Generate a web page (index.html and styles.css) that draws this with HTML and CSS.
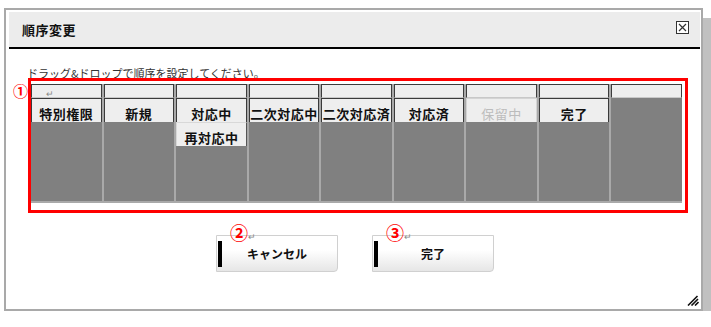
FILE: index.html
```html
<!DOCTYPE html>
<html lang="ja">

<head>
        <meta charset="UTF-8">
        <meta name="viewport" content="width=device-width, initial-scale=1.0">
        <title>順序変更</title>
        <link rel="stylesheet" href="styles.css">
</head>

<body>
        <div class="dialog">
                <div class="dlg-head">
                        <span class="dlg-title">順序変更</span>
                        <span class="dlg-close">
                                <svg width="13" height="13" viewBox="0 0 13 13">
                                        <rect x="0.5" y="0.5" width="12" height="12" fill="#fff" stroke="#333" />
                                        <path d="M3 3 L10 10 M10 3 L3 10" stroke="#333" stroke-width="1.2" />
                                </svg>
                        </span>
                </div>

                <p class="hint">ドラッグ&amp;ドロップで順序を設定してください。</p>

                <!-- 並び替えエリア -->
                <div class="mark-box">
                        <span class="mark mark-1">①</span>
                        <div class="board">
                                <div class="col">
                                        <div class="col-head"><span class="ret">↵</span></div>
                                        <div class="col-body">
                                                <div class="card">特別権限</div>
                                        </div>
                                </div>
                                <div class="col">
                                        <div class="col-head"></div>
                                        <div class="col-body">
                                                <div class="card">新規</div>
                                        </div>
                                </div>
                                <div class="col">
                                        <div class="col-head"></div>
                                        <div class="col-body">
                                                <div class="card">対応中</div>
                                                <div class="card card-sub">再対応中</div>
                                        </div>
                                </div>
                                <div class="col">
                                        <div class="col-head"></div>
                                        <div class="col-body">
                                                <div class="card">二次対応中</div>
                                        </div>
                                </div>
                                <div class="col">
                                        <div class="col-head"></div>
                                        <div class="col-body">
                                                <div class="card">二次対応済</div>
                                        </div>
                                </div>
                                <div class="col">
                                        <div class="col-head"></div>
                                        <div class="col-body">
                                                <div class="card">対応済</div>
                                        </div>
                                </div>
                                <div class="col">
                                        <div class="col-head"></div>
                                        <div class="col-body">
                                                <div class="card card-off">保留中</div>
                                        </div>
                                </div>
                                <div class="col">
                                        <div class="col-head"></div>
                                        <div class="col-body">
                                                <div class="card">完了</div>
                                        </div>
                                </div>
                                <div class="col">
                                        <div class="col-head"></div>
                                        <div class="col-body"></div>
                                </div>
                        </div>
                </div>

                <div class="actions">
                        <button class="btn"><span class="mark mark-btn">②<span class="ret">↵</span></span>キャンセル</button>
                        <button class="btn"><span class="mark mark-btn">③<span class="ret">↵</span></span>完了</button>
                </div>

                <svg class="grip" width="12" height="11" viewBox="0 0 12 11">
                        <path d="M1 10.5 L10.5 1 M4.5 10.5 L11 4 M8 10.5 L11.5 7" stroke="#111" stroke-width="1.6" />
                </svg>
        </div>
</body>

</html>
```

FILE: styles.css
```css
body {
        font-family: "Noto Sans CJK JP", sans-serif;
        background-color: #fff;
        margin: 0;
        padding: 0;
}

.dialog {
        position: relative;
        box-sizing: border-box;
        width: 699px;
        height: 303px;
        margin: 8px 0 0 4px;
        border: 2px solid #a9a9a9;
        background-color: #fff;
        box-shadow: 10px 10px 0 #c0c0c0;
}

.dlg-head {
        display: flex;
        justify-content: space-between;
        align-items: center;
        height: 35px;
        margin: 2px 1px 0 3px;
        padding: 0 11px 0 13px;
        background-color: #ececec;
        border-bottom: 2px solid #000;
}

.dlg-title {
        font-size: 13px;
        font-weight: bold;
        color: #111;
        letter-spacing: 0.5px;
}

.dlg-close {
        display: flex;
        margin-top: -5px;
}

.hint {
        margin: 18px 0 0 21px;
        font-size: 11px;
        line-height: 13px;
        color: #333;
}

.mark-box {
        position: relative;
        box-sizing: border-box;
        width: 660px;
        height: 135px;
        margin: -2px 0 0 22px;
        padding: 3px 3px 7px 0;
        border: 3px solid #f00;
}

.mark {
        position: absolute;
        color: #f00;
        font-weight: bold;
}

.mark-1 {
        left: -18px;
        top: 2px;
        font-size: 15px;
        line-height: 15px;
}

.ret {
        font-size: 9px;
        font-weight: normal;
        color: #888;
}

.board {
        display: grid;
        grid-template-columns: repeat(9, 1fr);
        column-gap: 2px;
        height: 100%;
        padding-bottom: 2px;
        box-sizing: border-box;
        background-color: #a9a9a9;
}

.col {
        display: flex;
        flex-direction: column;
        min-width: 0;
}

.col-head {
        box-sizing: border-box;
        height: 14px;
        padding-left: 14px;
        border: 1px solid #3c3c3c;
        border-bottom-color: #c8c8c8;
        background-color: #eee;
        line-height: 10px;
}

.col-body {
        flex: 1;
        background-color: #808080;
}

.card {
        box-sizing: border-box;
        height: 24px;
        padding-top: 7px;
        border: 1px solid #3a3a3a;
        border-bottom: none;
        background-color: #eee;
        font-size: 13px;
        font-weight: bold;
        line-height: 16px;
        letter-spacing: 0.5px;
        text-align: center;
        white-space: nowrap;
        overflow: hidden;
        color: #111;
}

.card-sub {
        border-top-color: #d8d8d8;
        border-left-color: #d8d8d8;
        border-right-color: #555;
}

.card-off {
        border-color: #d4d4d4;
        color: #bcbcbc;
        font-weight: normal;
}

.actions {
        display: flex;
        gap: 34px;
        margin-top: 22px;
        padding-left: 210px;
}

.btn {
        position: relative;
        width: 122px;
        height: 37px;
        padding: 0;
        border: 1px solid #d0d0d0;
        border-radius: 0 0 4px 0;
        background: linear-gradient(#fff, #fff 40%, #e6e6e6);
        font-family: "Noto Sans CJK JP", sans-serif;
        font-size: 12px;
        font-weight: bold;
        color: #111;
}

.btn::before {
        content: "";
        position: absolute;
        left: 1px;
        top: 5px;
        width: 4px;
        height: 26px;
        background-color: #000;
}

.mark-btn {
        left: 13px;
        top: -13px;
        font-size: 18px;
        line-height: 18px;
        white-space: nowrap;
}

.grip {
        position: absolute;
        right: 2px;
        bottom: 3px;
}
```
